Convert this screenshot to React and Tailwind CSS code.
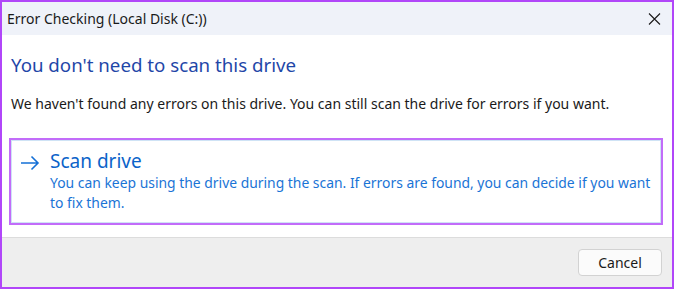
import React from 'react';

const font = { fontFamily: '"Noto Sans", "Open Sans", sans-serif' };

const App = () => {
  return (
    <div
      className="w-[674px] h-[289px] flex flex-col border-2 border-[#b146f9] bg-white text-black"
      style={font}
    >
      {/* title bar */}
      <div className="h-[33px] shrink-0 bg-[#eff2f9] flex items-center justify-between pl-[5px] pr-[11px]">
        <span className="text-[14px] leading-none text-[#1a1a1a]">Error Checking (Local Disk (C:))</span>
        <svg width="13" height="12" viewBox="0 0 13 12">
          <path d="M1 0.5 L12 11.5 M12 0.5 L1 11.5" stroke="#1a1a1a" strokeWidth="1.1" fill="none" />
        </svg>
      </div>

      {/* content */}
      <div className="flex-1 flex flex-col bg-white">
        <h1 className="pl-[9px] pt-[17px] text-[18.7px] leading-[26px] text-[#1f47a8]">
          You don't need to scan this drive
        </h1>
        <p className="pl-[9px] mt-[16px] text-[14px] leading-[20px] text-[#1a1a1a]">
          We haven't found any errors on this drive. You can still scan the drive for errors if you want.
        </p>
        <div className="ml-[7px] mt-[24px] w-[654px] h-[87px] border-2 border-[#c26cf9]">
          <div className="h-full border border-[#cfe3f5] flex pl-[8px] pt-[7px]">
            <svg width="20" height="16" viewBox="0 0 20 16" className="mt-[7px] shrink-0">
              <path d="M1 8 H18 M11.5 1.5 L18 8 L11.5 14.5" stroke="#1570d6" strokeWidth="1.6" fill="none" />
            </svg>
            <div className="ml-[10px]">
              <div className="text-[19px] leading-[26px] text-[#0b63c9]">Scan drive</div>
              <div className="text-[13.9px] leading-[20px] text-[#1a74d6] mt-[-1px]">
                You can keep using the drive during the scan. If errors are found, you can decide if you want to fix them.
              </div>
            </div>
          </div>
        </div>
      </div>

      {/* footer */}
      <div className="h-[50px] shrink-0 border-t border-[#dcdcdc] bg-[#eeeeee] flex items-start justify-end pr-[10px] pt-[11px]">
        <button className="w-[84px] h-[27px] rounded-[4px] border border-[#d2d2d2] bg-[#fbfbfb] text-[14px] leading-none text-[#1a1a1a]">
          Cancel
        </button>
      </div>
    </div>
  );
};

export default App;
